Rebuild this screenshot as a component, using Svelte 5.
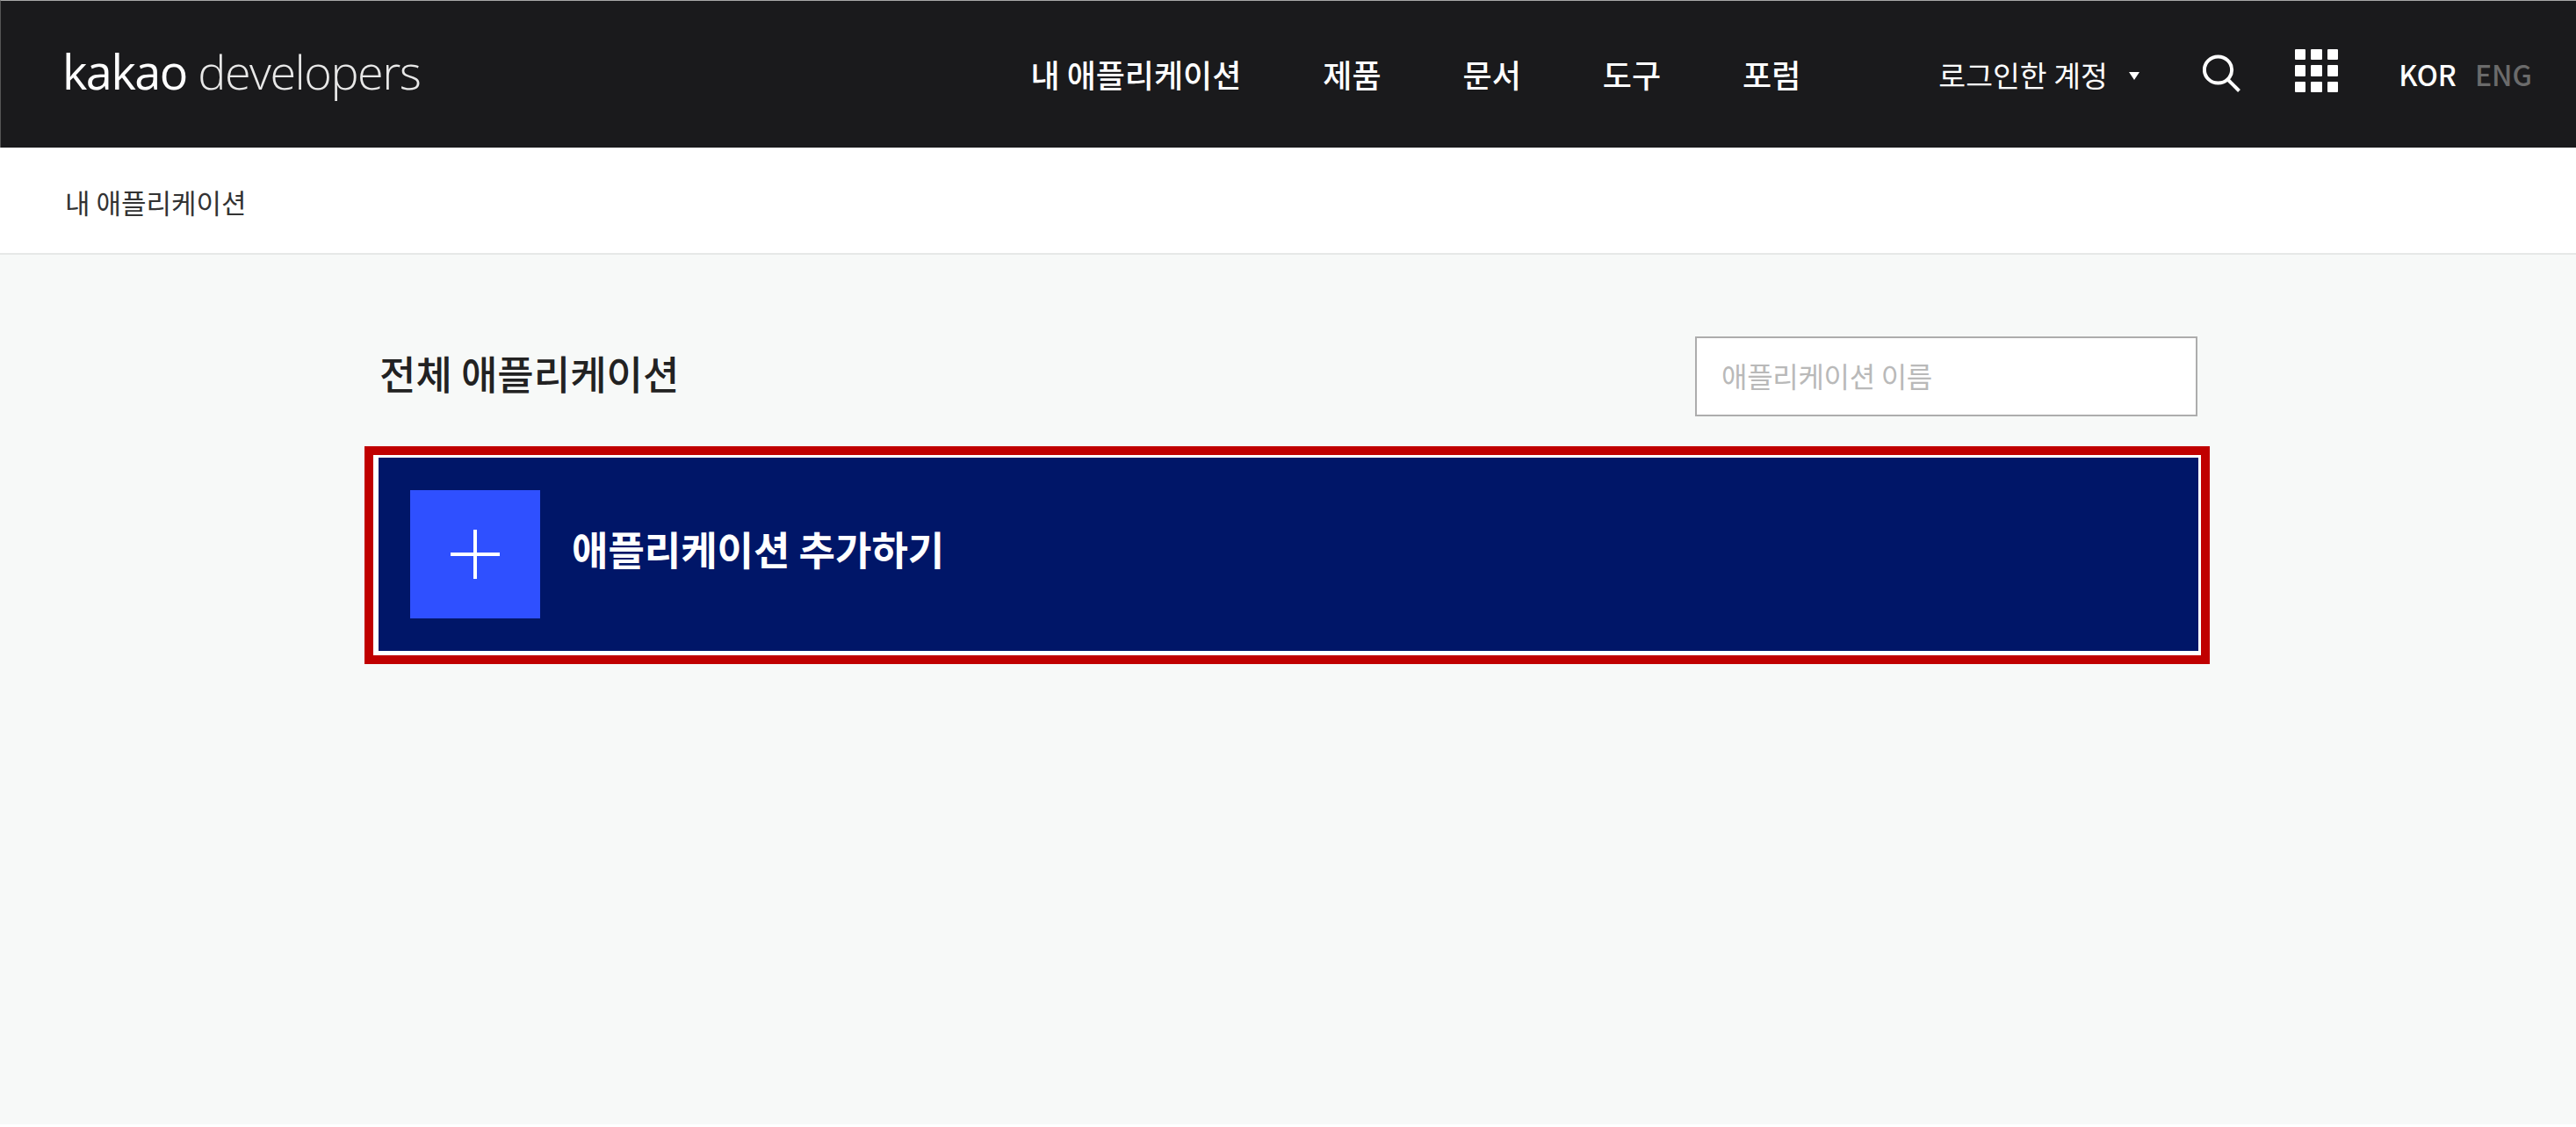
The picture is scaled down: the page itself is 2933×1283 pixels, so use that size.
<script>
	const menus = ['내 애플리케이션', '제품', '문서', '도구', '포럼'];
	const dots = Array.from({ length: 9 });
</script>

<div class="page">
	<header class="gnb">
		<a class="logo" href="#top"><b>kakao</b> developers</a>

		<nav class="menu">
			{#each menus as menu}
				<a href="#top">{menu}</a>
			{/each}
		</nav>

		<div class="account">
			<span>로그인한 계정</span>
			<i class="caret"></i>
		</div>

		<svg class="search" viewBox="0 0 44 43" aria-label="검색">
			<ellipse cx="17.5" cy="17.5" rx="15.6" ry="15" fill="none" stroke="#fff" stroke-width="4" />
			<path d="M29 29 L41.5 41.5" fill="none" stroke="#fff" stroke-width="4" />
		</svg>

		<div class="apps">
			{#each dots as _}
				<i></i>
			{/each}
		</div>

		<div class="lang">
			<span class="on">KOR</span>
			<span>ENG</span>
		</div>
	</header>

	<div class="crumb">내 애플리케이션</div>

	<main class="content">
		<div class="title-row">
			<h2>전체 애플리케이션</h2>
			<input type="text" placeholder="애플리케이션 이름" />
		</div>

		<div class="highlight">
			<button class="add" type="button">
				<span class="plus"></span>
				<strong>애플리케이션 추가하기</strong>
			</button>
		</div>
	</main>
</div>

<style>
	:global(body) {
		margin: 0;
		background: #fff;
	}

	.page {
		height: 1280px;
		display: flex;
		flex-direction: column;
		background: #f7f9f8;
		font-family: 'Noto Sans CJK KR', 'Noto Sans', sans-serif;
	}

	/* Top bar */
	.gnb {
		height: 167px;
		flex: none;
		display: flex;
		align-items: center;
		padding: 0 50px 0 70px;
		background: #1a1a1c;
		border-top: 1px solid #a8a8a8;
		border-left: 1px solid #555;
		box-sizing: content-box;
	}

	.logo {
		font-family: 'Open Sans', sans-serif;
		font-size: 54px;
		font-weight: 300;
		letter-spacing: -1.5px;
		color: #e8e8e8;
		text-decoration: none;
		margin-top: -8px;
	}

	.logo b {
		font-weight: 400;
		color: #fff;
	}

	.menu {
		display: flex;
		gap: 93px;
		margin-left: auto;
		margin-top: -2px;
	}

	.menu a {
		font-size: 36px;
		font-weight: 500;
		color: #fff;
		text-decoration: none;
	}

	.account {
		display: flex;
		align-items: center;
		gap: 24px;
		margin-left: 157px;
		font-size: 33.5px;
		color: #fff;
	}

	.caret {
		width: 0;
		height: 0;
		border-top: 9px solid #fff;
		border-left: 6.5px solid transparent;
		border-right: 6.5px solid transparent;
		margin-top: 4px;
	}

	.search {
		width: 44px;
		height: 43px;
		margin-left: 72px;
		margin-top: -2px;
	}

	.apps {
		display: grid;
		grid-template-columns: repeat(3, 12.5px);
		grid-auto-rows: 12.5px;
		gap: 6px;
		margin-left: 61px;
		margin-top: -8px;
	}

	.apps i {
		background: #fff;
		border-radius: 1px;
	}

	.lang {
		display: flex;
		gap: 21px;
		margin-left: 69px;
		font-size: 32px;
		font-weight: 500;
		color: #6b6b6b;
		margin-top: -1px;
	}

	.lang .on {
		color: #fff;
	}

	/* Breadcrumb */
	.crumb {
		height: 118px;
		flex: none;
		display: flex;
		align-items: center;
		padding: 2px 0 0 74px;
		background: #fff;
		border-bottom: 2px solid #e6e8e7;
		font-size: 31px;
		color: #333;
		box-sizing: content-box;
	}

	/* Content */
	.content {
		width: 2101px;
		margin-left: 415px;
		padding-top: 93px;
	}

	.title-row {
		display: flex;
		align-items: center;
		justify-content: space-between;
		height: 91px;
		padding: 0 14px 0 17px;
		margin-bottom: 34px;
	}

	h2 {
		margin: 0 0 9px;
		font-size: 45px;
		font-weight: 500;
		color: #222;
	}

	input {
		width: 572px;
		height: 91px;
		box-sizing: border-box;
		padding: 0 28px 3px;
		border: 2px solid #adadad;
		background: #fff;
		font-family: inherit;
		font-size: 32px;
		letter-spacing: -0.3px;
		outline: none;
	}

	input::placeholder {
		color: #b9b9b9;
	}

	.highlight {
		border: 10px solid #c00000;
		padding: 3px 3px 5px 6px;
		background: #fff;
	}

	.add {
		width: 100%;
		height: 220px;
		display: flex;
		align-items: center;
		gap: 36px;
		padding: 0 36px;
		border: 0;
		background: #001668;
		font-family: inherit;
		color: #fff;
	}

	.plus {
		position: relative;
		width: 148px;
		height: 146px;
		flex: none;
		background: #2f50ff;
	}

	.plus::before,
	.plus::after {
		content: '';
		position: absolute;
		left: 50%;
		top: 50%;
		background: #fff;
		transform: translate(-50%, -50%);
	}

	.plus::before {
		width: 56px;
		height: 4px;
	}

	.plus::after {
		width: 4px;
		height: 56px;
	}

	.add strong {
		font-size: 45px;
		font-weight: 700;
		margin-bottom: 14px;
	}
</style>
